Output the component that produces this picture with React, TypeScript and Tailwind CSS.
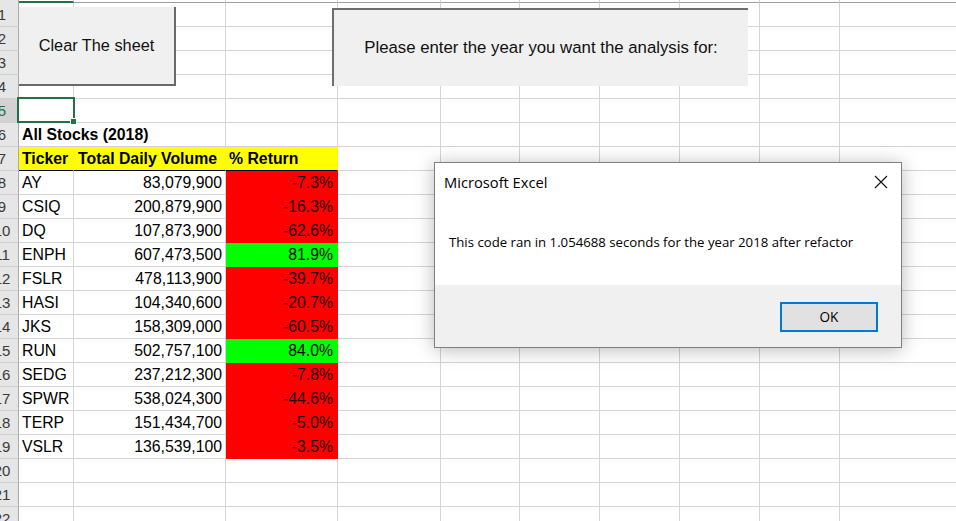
import React from "react";

type Row = { t: string; v: string; r: string; up: boolean };

const DATA: Row[] = [
  { t: "AY", v: "83,079,900", r: "-7.3%", up: false },
  { t: "CSIQ", v: "200,879,900", r: "-16.3%", up: false },
  { t: "DQ", v: "107,873,900", r: "-62.6%", up: false },
  { t: "ENPH", v: "607,473,500", r: "81.9%", up: true },
  { t: "FSLR", v: "478,113,900", r: "-39.7%", up: false },
  { t: "HASI", v: "104,340,600", r: "-20.7%", up: false },
  { t: "JKS", v: "158,309,000", r: "-60.5%", up: false },
  { t: "RUN", v: "502,757,100", r: "84.0%", up: true },
  { t: "SEDG", v: "237,212,300", r: "-7.8%", up: false },
  { t: "SPWR", v: "538,024,300", r: "-44.6%", up: false },
  { t: "TERP", v: "151,434,700", r: "-5.0%", up: false },
  { t: "VSLR", v: "136,539,100", r: "-3.5%", up: false },
];

const REST = ["w-[103px]", "w-[79px]", "w-[80px]", "w-[80px]", "w-[80px]", "w-[80px]"];

const cellBase = "shrink-0 h-full border-r border-b whitespace-nowrap leading-[23px] overflow-visible";
const grid = "border-[#d4d4d4]";

function RowHeader({ n }: { n: number }) {
  const sel = n === 5;
  return (
    <div
      className={
        "w-[19px] shrink-0 h-full overflow-hidden border-r border-r-[#ababab] border-b border-b-[#cfcfcf] " +
        (sel ? "bg-[#d2d2d2]" : "bg-[#e6e6e6]")
      }
    >
      <div
        className={
          "w-[30px] -ml-[13px] text-center text-[15px] leading-[23px] " +
          (sel ? "text-[#217346]" : "text-[#3a3a3a]")
        }
      >
        {n}
      </div>
    </div>
  );
}

function RestCells() {
  return (
    <>
      {REST.map((w, i) => (
        <div key={i} className={w + " " + cellBase + " " + grid} />
      ))}
      <div className={"flex-1 h-full border-b " + grid} />
    </>
  );
}

function SheetRow({ n }: { n: number }) {
  let cells: React.ReactNode;
  if (n === 6) {
    cells = (
      <>
        <div className={"w-[207px] pl-[3px] font-bold " + cellBase + " " + grid}>All Stocks (2018)</div>
        <div className={"w-[112px] " + cellBase + " " + grid} />
      </>
    );
  } else if (n === 7) {
    const y = "bg-[#ffff00] border-r-[#ffff00] border-b-black font-bold";
    cells = (
      <>
        <div className={"w-[55px] pl-[3px] " + cellBase + " " + y}>Ticker</div>
        <div className={"w-[152px] pl-[4px] " + cellBase + " " + y}>Total Daily Volume</div>
        <div className={"w-[112px] pl-[3px] " + cellBase + " " + y}>% Return</div>
      </>
    );
  } else if (n >= 8 && n <= 19) {
    const d = DATA[n - 8];
    const fill = d.up ? "bg-[#00ff00] border-[#00ff00]" : "bg-[#ff0000] border-[#ff0000]";
    cells = (
      <>
        <div className={"w-[55px] pl-[3px] " + cellBase + " " + grid}>{d.t}</div>
        <div className={"w-[152px] pr-[3px] text-right " + cellBase + " " + grid}>{d.v}</div>
        <div className={"w-[112px] pr-[4px] text-right text-[#1a0000] " + cellBase + " " + fill}>{d.r}</div>
      </>
    );
  } else {
    cells = (
      <>
        <div className={"w-[55px] " + cellBase + " " + grid} />
        <div className={"w-[152px] " + cellBase + " " + grid} />
        <div className={"w-[112px] " + cellBase + " " + grid} />
      </>
    );
  }
  return (
    <div className="flex h-[24px] shrink-0">
      <RowHeader n={n} />
      {cells}
      <RestCells />
    </div>
  );
}

export default function App() {
  const rows = Array.from({ length: 22 }, (_, i) => i + 1);
  return (
    <div className="relative w-[956px] h-[521px] overflow-hidden bg-white text-black font-['Liberation_Sans',Arial,sans-serif] text-[15.8px]">
      {/* column header remnant */}
      <div className="flex h-[3px]">
        <div className="w-[19px] shrink-0 bg-[#e6e6e6] border-r border-[#ababab]" />
        <div className="w-[55px] shrink-0 bg-white border-r border-r-[#d4d4d4] border-b-2 border-b-[#217346]" />
        <div className="w-[152px] shrink-0 border-r border-r-[#d4d4d4] border-b border-b-[#9e9e9e]" />
        <div className="w-[112px] shrink-0 border-r border-r-[#d4d4d4] border-b border-b-[#9e9e9e]" />
        {REST.map((w, i) => (
          <div key={i} className={w + " shrink-0 border-r border-r-[#d4d4d4] border-b border-b-[#9e9e9e]"} />
        ))}
        <div className="flex-1 border-b border-b-[#9e9e9e]" />
      </div>

      {rows.map((n) => (
        <SheetRow key={n} n={n} />
      ))}

      {/* selected cell A5 */}
      <div className="absolute left-[17px] top-[97px] w-[58px] h-[26px] border-2 border-[#217346]" />
      <div className="absolute left-[70px] top-[118px] w-[7px] h-[7px] bg-[#217346] border border-white" />

      {/* Clear button */}
      <div className="absolute left-[19px] top-[7px] w-[157px] h-[79px] bg-[#f0f0f0] border-r-2 border-b-2 border-[#696969] flex items-center justify-center text-[16.3px] text-[#111]">
        Clear The sheet
      </div>

      {/* Year button */}
      <div className="absolute left-[332px] top-[8px] w-[416px] h-[78px] bg-[#f0f0f0] border-l-2 border-t-2 border-[#6d6d6d] flex items-center justify-center text-[16.8px] text-[#111]">
        Please enter the year you want the analysis for:
      </div>

      {/* Dialog */}
      <div className="absolute left-[434px] top-[162px] w-[468px] h-[186px] bg-white border border-[#7f7f7f] shadow-[0_2px_18px_rgba(0,0,0,0.28)] flex flex-col font-['Open_Sans','Noto_Sans',sans-serif]">
        <div className="h-[38px] shrink-0 flex items-center justify-between pl-[9px] pr-[13px]">
          <span className="text-[14.7px] text-black">Microsoft Excel</span>
          <svg width="14" height="14" viewBox="0 0 14 14" className="block">
            <path d="M1 1 L13 13 M13 1 L1 13" stroke="#111" strokeWidth="1.1" fill="none" />
          </svg>
        </div>
        <div className="flex-1 flex items-center pl-[14px] text-[13.2px] text-black">
          This code ran in 1.054688 seconds for the year 2018 after refactor
        </div>
        <div className="h-[62px] shrink-0 bg-[#f0f0f0] flex justify-end items-start pt-[17px] pr-[23px]">
          <div className="w-[98px] h-[30px] border-2 border-[#0078d7] bg-[#e1e1e1] flex items-center justify-center text-[13.6px] text-black">
            OK
          </div>
        </div>
      </div>
    </div>
  );
}
